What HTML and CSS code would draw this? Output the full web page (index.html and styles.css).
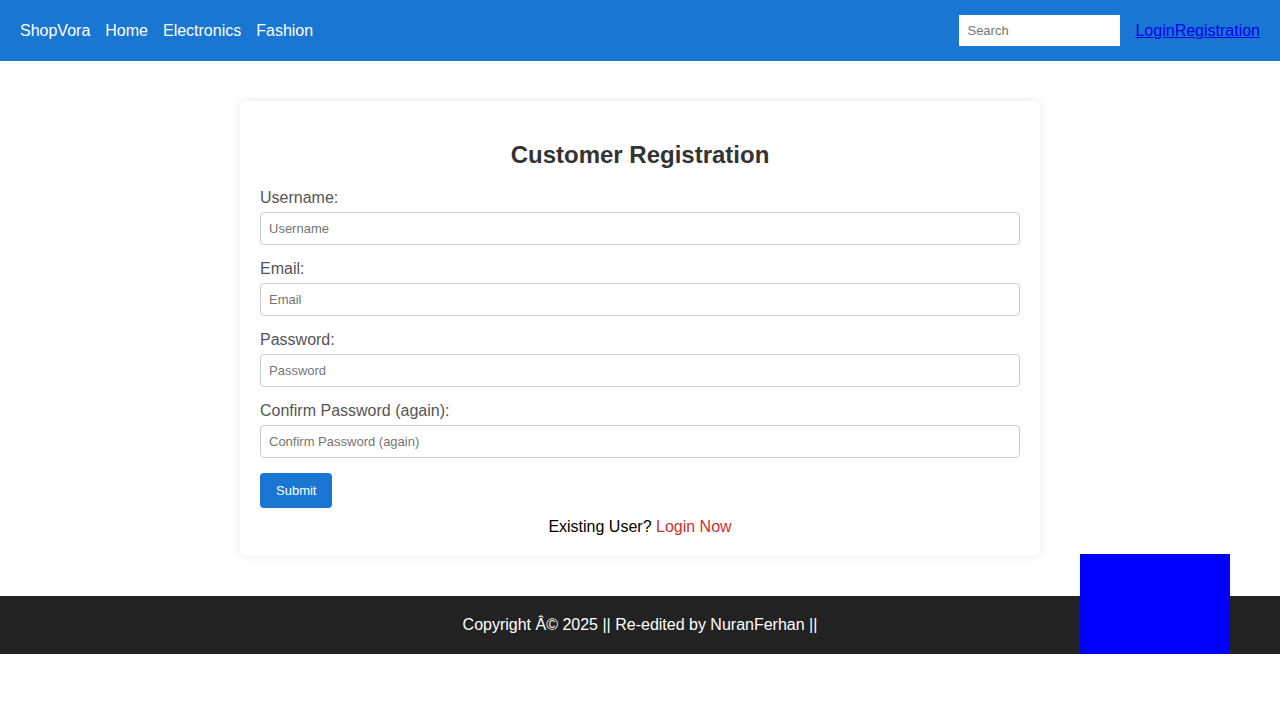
FILE: index.html
```html
<!DOCTYPE html>
<html lang="en">
<head>
<meta charset="utf-8">
<title>ShopVora - Customer Registration</title>
<link rel="stylesheet" href="styles.css">
</head>
<body>
<header class="topbar">
  <nav class="nav-left">
    <a class="nav-link" href="#">ShopVora</a>
    <a class="nav-link" href="#">Home</a>
    <a class="nav-link" href="#">Electronics</a>
    <a class="nav-link" href="#">Fashion</a>
  </nav>
  <div class="nav-right">
    <input class="search" type="text" placeholder="Search">
    <div class="auth-links"><a href="#">Login</a><a href="#">Registration</a></div>
  </div>
</header>
<main class="main">
  <section class="card">
    <h2 class="card-title">Customer Registration</h2>
    <form class="form">
      <div class="form-group">
        <label class="label">Username:</label>
        <input class="input" type="text" placeholder="Username">
      </div>
      <div class="form-group">
        <label class="label">Email:</label>
        <input class="input" type="text" placeholder="Email">
      </div>
      <div class="form-group">
        <label class="label">Password:</label>
        <input class="input" type="password" placeholder="Password">
      </div>
      <div class="form-group">
        <label class="label">Confirm Password (again):</label>
        <input class="input" type="password" placeholder="Confirm Password (again)">
      </div>
      <button class="submit" type="button">Submit</button>
    </form>
    <p class="existing">Existing User? <a class="login-now" href="#">Login Now</a></p>
  </section>
</main>
<footer class="footer">
  <p class="copyright">Copyright Â© 2025 || Re-edited by NuranFerhan ||</p>
  <div class="blue-box"></div>
</footer>
</body>
</html>
```
FILE: styles.css
```css
* { box-sizing: border-box; }
body {
  margin: 0;
  font-family: "Liberation Sans", Arial, sans-serif;
  background: #fff;
}
.topbar {
  height: 61px;
  background: #1976d2;
  display: flex;
  align-items: center;
  justify-content: space-between;
  padding: 0 20px;
}
.nav-left { display: flex; gap: 15px; }
.nav-link { color: #fff; text-decoration: none; font-size: 16px; }
.nav-right { display: flex; align-items: center; gap: 15px; }
.search {
  width: 161px;
  height: 31px;
  border: none;
  padding: 8px;
  font-family: inherit;
  font-size: 13px;
  outline: none;
}
.search::placeholder { color: #757575; }
.auth-links a { color: #0000ee; font-size: 16px; }
.main {
  display: flex;
  justify-content: center;
  padding: 40px 0 40px;
}
.card {
  width: 800px;
  background: #fff;
  border-radius: 6px;
  box-shadow: 0 0 10px rgba(0,0,0,0.1);
  padding: 20px;
}
.card-title {
  text-align: center;
  color: #333;
  font-size: 24px;
  margin: 20px 0;
}
.form-group { margin-bottom: 15px; }
.label {
  display: block;
  color: #555;
  font-size: 16px;
  margin-bottom: 5px;
}
.input {
  display: block;
  width: 100%;
  height: 33px;
  padding: 8px;
  border: 1px solid #ccc;
  border-radius: 4px;
  font-family: inherit;
  font-size: 13px;
}
.input::placeholder { color: #757575; }
.submit {
  background: #1976d2;
  color: #fff;
  border: none;
  border-radius: 4px;
  padding: 10px 16px;
  height: 35px;
  font-family: inherit;
  font-size: 13px;
}
.existing {
  text-align: center;
  font-size: 16px;
  color: #000;
  margin: 10px 0 0;
}
.login-now { color: #d32f2f; text-decoration: none; }
.footer {
  position: relative;
  height: 58px;
  background: #222;
  display: flex;
  align-items: center;
  justify-content: center;
}
.copyright {
  margin: 0;
  color: #fff;
  font-size: 16px;
}
.blue-box {
  position: absolute;
  right: 50px;
  bottom: 0;
  width: 150px;
  height: 100px;
  background: #0000ff;
}
```
